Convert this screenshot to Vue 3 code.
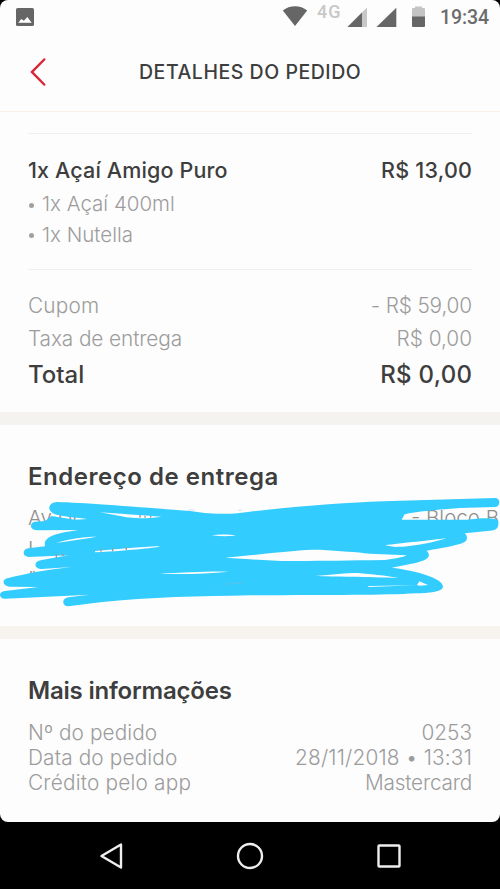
<script setup>
const extras = ['1x Açaí 400ml', '1x Nutella']
const fees = [
  { label: 'Cupom', value: '- R$ 59,00', cls: 'coupon' },
  { label: 'Taxa de entrega', value: 'R$ 0,00', cls: 'delivery' },
]
const info = [
  { label: 'Nº do pedido', value: '0253', cls: 'number' },
  { label: 'Data do pedido', value: '28/11/2018 • 13:31', cls: 'date' },
  { label: 'Crédito pelo app', value: 'Mastercard', cls: 'credit' },
]
</script>

<template>
  <div class="phone">
    <div class="screen">
      <div class="status">
        <svg class="photo" width="18" height="18" viewBox="0 0 18 18">
          <rect width="18" height="18" rx="1.6" fill="#666" />
          <path d="M2.300 14.700L5.300 11l2.600 1.800L11.300 9l4.400 5.700z" fill="#fff" />
        </svg>
        <svg class="signals" width="150" height="34" viewBox="0 0 150 34">
          <path d="M2.800 10.500C9.500 4.700 20.500 4.700 27.200 10.500L15 26z" fill="#666" />
          <path d="M67.500 27L87 7.500V27z" fill="#c8c8c8" />
          <path d="M67.500 27L82 12.500V27z" fill="#666" />
          <path d="M96.500 27L116.300 7.700V27z" fill="#666" />
          <path d="M132 9q0-1 1-1h2V6.500h7V8h2q1 0 1 1v8h-13z" fill="#c4c4c4" />
          <path d="M132 16.500h13V26q0 1-1 1h-11q-1 0-1-1z" fill="#666" />
        </svg>
        <span class="network">4G</span>
        <span class="clock">19:34</span>
      </div>
      <header class="header">
        <svg class="back" width="16" height="28" viewBox="0 0 16 28">
          <path d="M14.200 1.500L2 14l12.200 12.500" fill="none" stroke="#d92638" stroke-width="2.500" stroke-linecap="round" />
        </svg>
        <h1>DETALHES DO PEDIDO</h1>
      </header>

      <section class="order">
        <div class="item">
          <div class="row item-head">
            <span class="item-name">1x Açaí Amigo Puro</span><span class="item-price">R$ 13,00</span>
          </div>
          <div v-for="e in extras" :key="e" class="extra"><i class="dot"></i>{{ e }}</div>
        </div>
        <div class="totals">
          <div v-for="f in fees" :key="f.label" class="row fee" :class="f.cls">
            <span class="label">{{ f.label }}</span><span class="value">{{ f.value }}</span>
          </div>
          <div class="row total"><span class="label">Total</span><span class="value">R$ 0,00</span></div>
        </div>
      </section>

      <section class="address">
        <h2>Endereço de entrega</h2>
        <div class="lines">
          <div class="row"><span>Av Dr</span><span class="block">- Bloco B</span></div>
          <div>L</div>
          <div>"</div>
        </div>
        <svg class="scribble" width="500" height="190" viewBox="0 0 1500 570">
          <path fill="#33ccff" fill-rule="evenodd" d="M172 156C250 158 400 170 570 183C620 190 660 197 750 185C900 168 1040 158 1150 154L1485 144C1502 144 1502 170 1485 171L1380 174C1300 180 1220 188 1213 194L1205 209L1400 209C1440 204 1495 200 1495 215C1497 235 1487 242 1470 242L1395 250C1410 270 1395 280 1370 284C1340 293 1300 297 1280 302C1295 318 1285 330 1250 338L1175 353C1250 362 1330 385 1329 410C1325 430 1270 428 1250 430C1150 436 1000 435 750 436C600 440 450 440 300 457L205 469C185 468 184 445 205 442L270 434L15 446C-5 446 -5 424 15 423L115 411L30 410C5 408 5 386 25 384C80 370 150 358 215 351L125 357C100 355 100 333 125 330L205 316L85 321C65 318 68 297 85 295L135 289C130 265 150 252 235 240L110 241C88 240 88 218 105 215L135 213L155 198L225 209L262 207C200 200 165 198 155 187C140 175 150 156 172 156Z
          M300 187C350 190 430 197 485 200C440 206 400 205 380 202Z
          M168 279C200 268 250 260 290 260C250 268 210 272 168 279Z
          M285 303L400 293L478 288C485 292 400 300 285 307Z
          M635 256C660 252 690 254 707 256C690 260 660 259 635 256Z
          M675 323L750 316C850 305 920 298 960 299C1020 303 1070 306 1110 311L1220 316C1210 322 1180 327 1155 330C1000 332 900 334 830 332L750 328Z
          M480 371C560 367 630 363 685 365C620 372 540 374 480 371Z
          M1155 286C1200 280 1300 270 1338 265C1310 275 1240 291 1185 291Z
          M945 378C1000 373 1050 368 1075 369C1130 374 1180 380 1195 384C1100 380 1000 380 945 378Z
          M1250 405L1253 402L1258 394L1284 405L1260 407Z
          M1105 408L1250 406L1105 411Z" />
          <path d="M670 403L732 398M565 180h18M715 181h10" stroke="#8fb9c8" stroke-width="2" opacity=".6" />
          <path d="M420 195v8M435 197v6M452 198v5M303 296v9M338 294v10M379 291v9" stroke="#999" stroke-width="4" />
          <path d="M169 312v12M185 315h8" stroke="#999" stroke-width="4" />
        </svg>
      </section>

      <section class="info">
        <h2>Mais informações</h2>
        <div v-for="r in info" :key="r.label" class="row info-row" :class="r.cls">
          <span class="label">{{ r.label }}</span><span class="value">{{ r.value }}</span>
        </div>
      </section>
    </div>
    <nav class="nav">
      <svg width="24" height="28" viewBox="0 0 24 28"><path d="M2.500 14L22 2.500v23z" fill="none" stroke="#eee" stroke-width="2.400" stroke-linejoin="round" /></svg>
      <svg width="28" height="28" viewBox="0 0 28 28"><circle cx="14" cy="14" r="12" fill="none" stroke="#eee" stroke-width="2.400" /></svg>
      <svg width="24" height="28" viewBox="0 0 24 28"><rect x="1.500" y="3.500" width="21" height="21" rx=".8" fill="none" stroke="#eee" stroke-width="2.400" /></svg>
    </nav>
  </div>
</template>

<style>
body { margin: 0; background: #000; }
</style>
<style scoped>
.phone { width: 500px; height: 889px; background: #000; overflow: hidden; font-family: Inter, "Liberation Sans", sans-serif; color: #3e3e3e; display: flex; flex-direction: column; }
.phone * { box-sizing: border-box; }
.screen { height: 822px; background: #fdfdfd; border-radius: 8px; overflow: hidden; }
.status { height: 34px; display: flex; position: relative; }
.photo { margin: 8px 0 0 16px; }
.signals { margin-left: 246px; }
.network { position: absolute; left: 317px; top: 2px; font: 500 18px/20px Roboto, sans-serif; letter-spacing: 1px; color: #c8c8c8; }
.clock { position: absolute; left: 440px; top: 6px; font: 500 19.500px/24px Roboto, sans-serif; letter-spacing: -.1px; color: #6c6c6c; }
.header { height: 78px; border-bottom: 1px solid #f7efe9; display: flex; align-items: flex-start; }
.back { margin: 24px 0 0 30px; }
h1 { margin: 23px 0 0 93px; font-size: 19.500px; font-weight: 500; line-height: 30px; white-space: nowrap; letter-spacing: .53px; }
h2 { margin: 0; font-size: 24px; line-height: 42px; height: 40px; font-weight: 600; white-space: nowrap; }
.address h2 { letter-spacing: .53px; }
.info h2 { letter-spacing: -.2px; }
.row { display: flex; justify-content: space-between; white-space: nowrap; }
.order { padding: 21px 28px 19px; height: 300px; }
.item { border-top: 1px solid #efefef; border-bottom: 1px solid #efefef; padding: 18px 0 19px; height: 137px; }
.item-head { font-size: 21.500px; line-height: 37px; font-weight: 450; }
.item-name { letter-spacing: .14px; }
.item-price { letter-spacing: .25px; margin-right: -.25px; }
.extra { font-size: 20.500px; line-height: 30.500px; color: #9c9c9c; font-weight: 350; display: flex; align-items: center; }
.dot { width: 5px; height: 5px; border-radius: 50%; background: #a0a0a0; margin: 2px 8px 0 1px; }
.totals { padding-top: 19px; }
.fee { font-size: 20.800px; line-height: 33.300px; color: #9c9c9c; font-weight: 350; }
.coupon .label { letter-spacing: .2px; }
.coupon .value { letter-spacing: -.15px; }
.delivery .label { letter-spacing: -.1px; }
.total { font-size: 24px; line-height: 38px; font-weight: 450; }
.total .value { letter-spacing: .3px; margin-right: -.3px; }
.address { border-top: 13px solid #f4f3f0; height: 214px; padding: 31px 0 0 28px; position: relative; }
.lines { margin-top: 7px; font-size: 20.500px; line-height: 30.500px; font-weight: 300; color: #8f8f8f; }
.block { margin-right: 1px; }
.scribble { position: absolute; left: 0; top: 25px; }
.info { border-top: 13px solid #f7f3ef; padding: 30.500px 28px 0; }
.info h2 { margin-bottom: 10px; }
.info-row { font-size: 20.800px; line-height: 25.300px; color: #9c9c9c; font-weight: 350; }
.number .label { letter-spacing: .1px; }
.date .label { letter-spacing: .14px; }
.credit .label { letter-spacing: .2px; }
.date .value { letter-spacing: .18px; }
.credit .value { letter-spacing: -.2px; }
.nav { height: 67px; display: flex; justify-content: space-between; align-items: center; padding: 0 99px 0 99px; }
</style>
